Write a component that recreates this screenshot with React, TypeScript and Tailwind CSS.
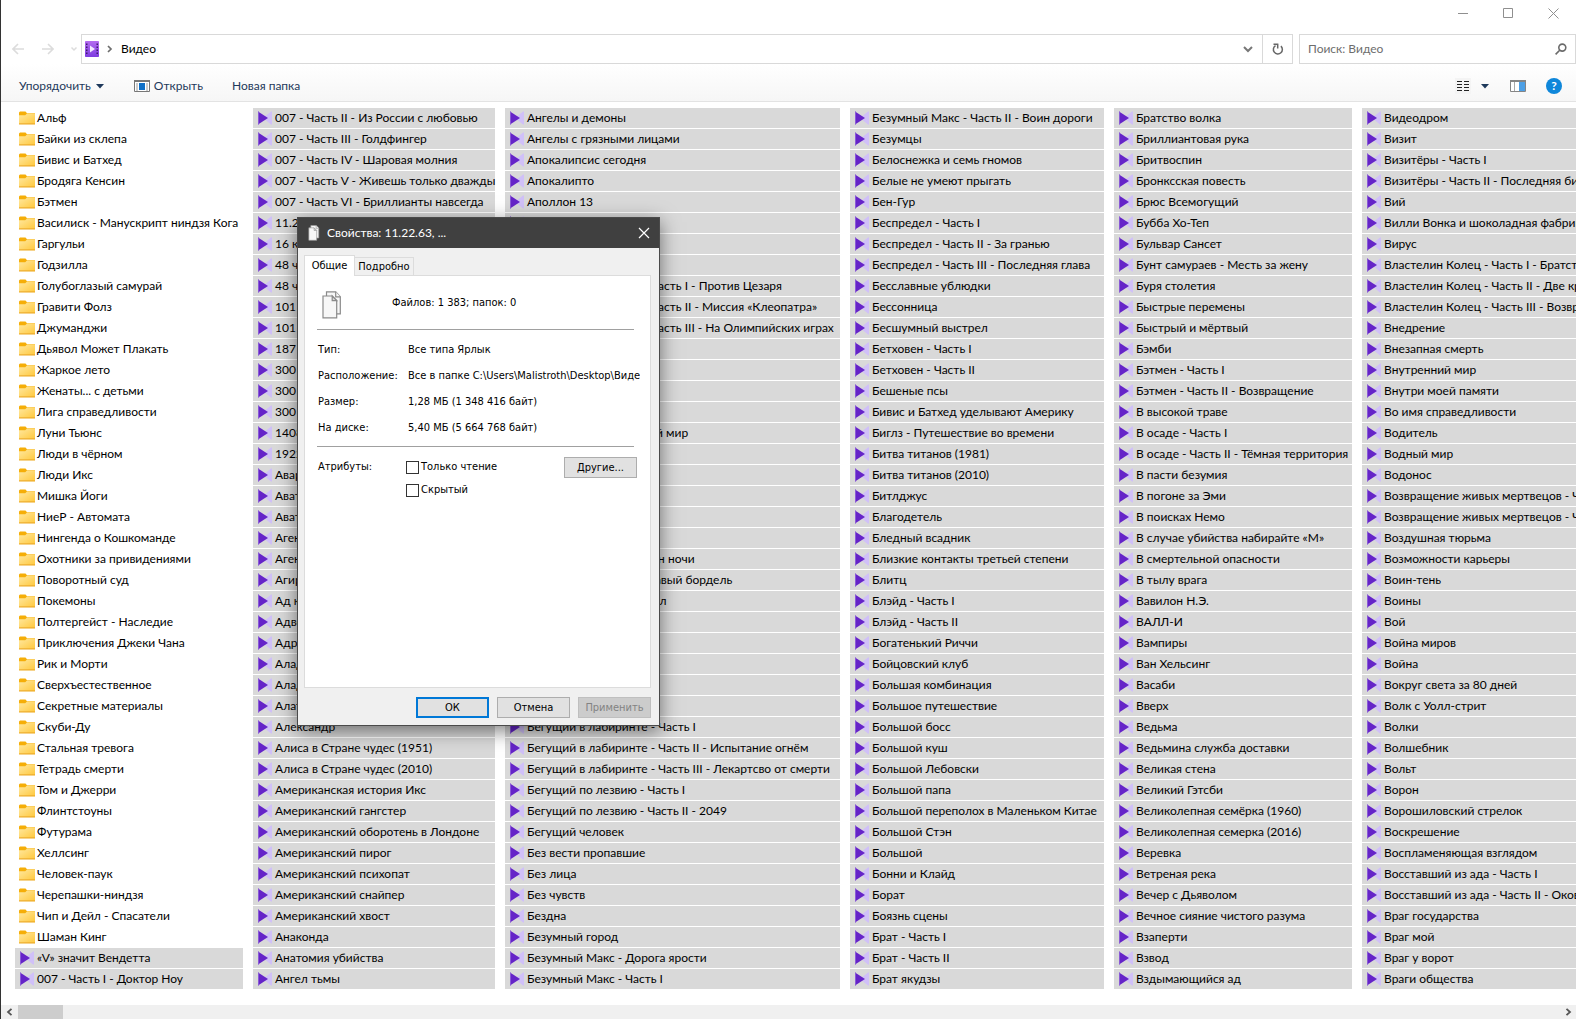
import type { ReactNode } from 'react'

interface Column {
  width: string
  folders?: string[]
  files: string[]
}

const columns: Column[] = [
  {
    width: 'w-[228px]',
    folders: [
      'Альф', 'Байки из склепа', 'Бивис и Батхед', 'Бродяга Кенсин', 'Бэтмен',
      'Василиск - Манускрипт ниндзя Кога', 'Гаргульи', 'Годзилла', 'Голубоглазый самурай',
      'Гравити Фолз', 'Джуманджи', 'Дьявол Может Плакать', 'Жаркое лето', 'Женаты... с детьми',
      'Лига справедливости', 'Луни Тьюнс', 'Люди в чёрном', 'Люди Икс', 'Мишка Йоги',
      'НиеР - Автомата', 'Нингенда о Кошкоманде', 'Охотники за привидениями', 'Поворотный суд',
      'Покемоны', 'Полтергейст - Наследие', 'Приключения Джеки Чана', 'Рик и Морти',
      'Сверхъестественное', 'Секретные материалы', 'Скуби-Ду', 'Стальная тревога',
      'Тетрадь смерти', 'Том и Джерри', 'Флинтстоуны', 'Футурама', 'Хеллсинг', 'Человек-паук',
      'Черепашки-ниндзя', 'Чип и Дейл - Спасатели', 'Шаман Кинг',
    ],
    files: ['«V» значит Вендетта', '007 - Часть I - Доктор Ноу'],
  },
  {
    width: 'w-[242px]',
    files: [
      '007 - Часть II - Из России с любовью', '007 - Часть III - Голдфингер',
      '007 - Часть IV - Шаровая молния', '007 - Часть V - Живешь только дважды',
      '007 - Часть VI - Бриллианты навсегда', '11.22.63', '16 кварталов', '48 часов - Часть I',
      '48 часов - Часть II', '101 далматинец (1961)', '101 далматинец (1996)', '187',
      '300 - Часть I', '300 - Часть II', '300 - Часть III', '1408', '1922', 'Авария',
      'Аватар - Часть I', 'Аватар - Часть II', 'Агент 117', 'Агент Джонни Инглиш',
      'Агирре - Гнев божий', 'Ад каннибалов', 'Адвокат дьявола', 'Адреналин',
      'Аладдин (1992)', 'Аладдин (2019)', 'Алатристе', 'Александр',
      'Алиса в Стране чудес (1951)', 'Алиса в Стране чудес (2010)', 'Американская история Икс',
      'Американский гангстер', 'Американский оборотень в Лондоне', 'Американский пирог',
      'Американский психопат', 'Американский снайпер', 'Американский хвост', 'Анаконда',
      'Анатомия убийства', 'Ангел тьмы',
    ],
  },
  {
    width: 'w-[335px]',
    files: [
      'Ангелы и демоны', 'Ангелы с грязными лицами', 'Апокалипсис сегодня', 'Апокалипто',
      'Аполлон 13', 'Апостол', 'Арахнофобия', 'Армагеддон',
      'Астерикс и Обеликс - Часть I - Против Цезаря',
      'Астерикс и Обеликс - Часть II - Миссия «Клеопатра»',
      'Астерикс и Обеликс - Часть III - На Олимпийских играх',
      'Астрал', 'Атака титанов', 'Атака клонов', 'Атлантида', 'Атлантида - Затерянный мир',
      'Афера', 'Аферисты', 'Афоня', 'Багровый пик', 'Багси Мэлоун',
      'Байки из склепа - Демон ночи', 'Байки из склепа - Кровавый бордель',
      'Байки из склепа - Ритуал', 'Балто', 'Банши', 'Бараны', 'Бассейн', 'Бегущая',
      'Бегущий в лабиринте - Часть I', 'Бегущий в лабиринте - Часть II - Испытание огнём',
      'Бегущий в лабиринте - Часть III - Лекартсво от смерти', 'Бегущий по лезвию - Часть I',
      'Бегущий по лезвию - Часть II - 2049', 'Бегущий человек', 'Без вести пропавшие',
      'Без лица', 'Без чувств', 'Бездна', 'Безумный город', 'Безумный Макс - Дорога ярости',
      'Безумный Макс - Часть I',
    ],
  },
  {
    width: 'w-[254px]',
    files: [
      'Безумный Макс - Часть II - Воин дороги', 'Безумцы', 'Белоснежка и семь гномов',
      'Белые не умеют прыгать', 'Бен-Гур', 'Беспредел - Часть I',
      'Беспредел - Часть II - За гранью', 'Беспредел - Часть III - Последняя глава',
      'Бесславные ублюдки', 'Бессонница', 'Бесшумный выстрел', 'Бетховен - Часть I',
      'Бетховен - Часть II', 'Бешеные псы', 'Бивис и Батхед уделывают Америку',
      'Биглз - Путешествие во времени', 'Битва титанов (1981)', 'Битва титанов (2010)',
      'Битлджус', 'Благодетель', 'Бледный всадник', 'Близкие контакты третьей степени',
      'Блитц', 'Блэйд - Часть I', 'Блэйд - Часть II', 'Богатенький Риччи', 'Бойцовский клуб',
      'Большая комбинация', 'Большое путешествие', 'Большой босс', 'Большой куш',
      'Большой Лебовски', 'Большой папа', 'Большой переполох в Маленьком Китае',
      'Большой Стэн', 'Большой', 'Бонни и Клайд', 'Борат', 'Боязнь сцены', 'Брат - Часть I',
      'Брат - Часть II', 'Брат якудзы',
    ],
  },
  {
    width: 'w-[238px]',
    files: [
      'Братство волка', 'Бриллиантовая рука', 'Бритвоспин', 'Бронксская повесть',
      'Брюс Всемогущий', 'Бубба Хо-Теп', 'Бульвар Сансет', 'Бунт самураев - Месть за жену',
      'Буря столетия', 'Быстрые перемены', 'Быстрый и мёртвый', 'Бэмби', 'Бэтмен - Часть I',
      'Бэтмен - Часть II - Возвращение', 'В высокой траве', 'В осаде - Часть I',
      'В осаде - Часть II - Тёмная территория', 'В пасти безумия', 'В погоне за Эми',
      'В поисках Немо', 'В случае убийства набирайте «М»', 'В смертельной опасности',
      'В тылу врага', 'Вавилон Н.Э.', 'ВАЛЛ-И', 'Вампиры', 'Ван Хельсинг', 'Васаби', 'Вверх',
      'Ведьма', 'Ведьмина служба доставки', 'Великая стена', 'Великий Гэтсби',
      'Великолепная семёрка (1960)', 'Великолепная семерка (2016)', 'Веревка',
      'Ветреная река', 'Вечер с Дьяволом', 'Вечное сияние чистого разума', 'Взаперти',
      'Взвод', 'Вздымающийся ад',
    ],
  },
  {
    width: 'w-[300px]',
    files: [
      'Видеодром', 'Визит', 'Визитёры - Часть I', 'Визитёры - Часть II - Последняя битва',
      'Вий', 'Вилли Вонка и шоколадная фабрика', 'Вирус',
      'Властелин Колец - Часть I - Братство Кольца',
      'Властелин Колец - Часть II - Две крепости',
      'Властелин Колец - Часть III - Возвращение Короля', 'Внедрение', 'Внезапная смерть',
      'Внутренний мир', 'Внутри моей памяти', 'Во имя справедливости', 'Водитель',
      'Водный мир', 'Водонос', 'Возвращение живых мертвецов - Часть I',
      'Возвращение живых мертвецов - Часть II', 'Воздушная тюрьма', 'Возможности карьеры',
      'Воин-тень', 'Воины', 'Вой', 'Война миров', 'Война', 'Вокруг света за 80 дней',
      'Волк с Уолл-стрит', 'Волки', 'Волшебник', 'Вольт', 'Ворон', 'Ворошиловский стрелок',
      'Воскрешение', 'Воспламеняющая взглядом', 'Восставший из ада - Часть I',
      'Восставший из ада - Часть II - Оковы', 'Враг государства', 'Враг мой',
      'Враг у ворот', 'Враги общества',
    ],
  },
]

const properties = [
  ['Тип:', 'Все типа Ярлык'],
  ['Расположение:', 'Все в папке C:\\Users\\Malistroth\\Desktop\\Видео'],
  ['Размер:', '1,28 МБ (1 348 416 байт)'],
  ['На диске:', '5,40 МБ (5 664 768 байт)'],
]

function FolderIcon() {
  return (
    <svg className="h-4 w-4 shrink-0" viewBox="0 0 16 16">
      <defs>
        <linearGradient id="folder" x1="0" y1="0" x2="1" y2="1">
          <stop offset="0" stopColor="#ffe8a0" />
          <stop offset="1" stopColor="#ffc83c" />
        </linearGradient>
      </defs>
      <path d="M0 2.5 1 1.5h5.5l1.5 1.7h8V6H0z" fill="#f5ae08" />
      <path d="M0 5.3h6.2L8 3.6h8v10.6H0z" fill="url(#folder)" />
      <path d="M0 13.4h16v1H0z" fill="#e9a525" />
    </svg>
  )
}

function VideoIcon() {
  return (
    <svg className="h-3.5 w-3.5 shrink-0" viewBox="0 0 14 14">
      <path d="M14 .5v13h-1L5 7l8-6.5z" fill="#d0c0f8" />
      <path d="M0 .5 10 7 0 13.5z" fill="#6524c8" />
      <path d="M0 .5h1v13H0z" fill="#8a5ad6" />
    </svg>
  )
}

function PagesIcon({ className, dark }: { className: string; dark?: boolean }) {
  const stroke = dark ? '#9a9a9a' : '#8a8a8a'
  return (
    <svg className={className} viewBox="0 0 20 28" fill="#f7f7f7" stroke={stroke} strokeWidth="1.2">
      <path d="M4.5.8h9.2l4.6 5v17H4.5z" />
      <path d="M13.7.8v5h4.6" />
      <path d="M1 5h9.2l4.5 4.6v17.2H1z" />
      <path d="M10.2 5v4.6h4.5z" fill="#dcdcdc" />
    </svg>
  )
}

function DownTriangle() {
  return (
    <svg className="h-2 w-2" viewBox="0 0 8 8">
      <path d="M0 2h8L4 6.5z" fill="#1e395b" />
    </svg>
  )
}

function TitleBar() {
  return (
    <div className="flex h-[34px] justify-end text-[#8f8f8f]">
      <button aria-label="Свернуть" className="flex h-[26px] w-[45px] items-center justify-center">
        <svg className="h-[11px] w-[11px]" viewBox="0 0 11 11" stroke="currentColor">
          <path d="M0 5.5h10" />
        </svg>
      </button>
      <button aria-label="Развернуть" className="flex h-[26px] w-[45px] items-center justify-center">
        <svg className="h-[11px] w-[11px]" viewBox="0 0 11 11" stroke="currentColor" fill="none">
          <path d="M.5.5h9v9h-9z" />
        </svg>
      </button>
      <button aria-label="Закрыть" className="flex h-[26px] w-[45px] items-center justify-center">
        <svg className="h-[11px] w-[11px]" viewBox="0 0 11 11" stroke="currentColor">
          <path d="m.5.5 10 10M10.5.5l-10 10" />
        </svg>
      </button>
    </div>
  )
}

function AddressBar() {
  return (
    <div className="flex h-[30px]">
      <nav className="flex w-20 shrink-0 items-center pl-[11px] text-[#dcdcdc]">
        <button aria-label="Назад">
          <svg className="h-3 w-3" viewBox="0 0 12 12" stroke="currentColor" strokeWidth="1.6" fill="none">
            <path d="M12 6H1M6 1 1 6l5 5" />
          </svg>
        </button>
        <button aria-label="Вперёд" className="ml-[18px]">
          <svg className="h-3 w-3" viewBox="0 0 12 12" stroke="currentColor" strokeWidth="1.6" fill="none">
            <path d="M0 6h11M6 1l5 5-5 5" />
          </svg>
        </button>
        <button aria-label="Последние расположения" className="ml-4">
          <svg className="h-2 w-2" viewBox="0 0 8 8" stroke="currentColor" strokeWidth="1.5" fill="none">
            <path d="m1.5 2.5 2.5 2.5 2.5-2.5" />
          </svg>
        </button>
      </nav>
      <div className="flex min-w-0 flex-1 border border-[#d9d9d9]">
        <div className="flex min-w-0 flex-1 items-center pl-[3px]">
          <svg className="h-4 w-[14px]" viewBox="0 0 14 16">
            <defs>
              <linearGradient id="film" x1="0" y1="0" x2="0" y2="1">
                <stop offset="0" stopColor="#b46cf0" />
                <stop offset="1" stopColor="#7d3be0" />
              </linearGradient>
            </defs>
            <rect width="14" height="16" rx=".8" fill="url(#film)" />
            <path
              d="M1 2.5h1.5V4H1zm0 3h1.5V7H1zm0 3h1.5V10H1zm0 3h1.5V13H1zm10.5-9H13V4h-1.5zm0 3H13V7h-1.5zm0 3H13V10h-1.5zm0 3H13V13h-1.5z"
              fill="#3f1a6b"
            />
            <path d="M5 4.5 10 8l-5 3.5z" fill="#f1e8ff" />
          </svg>
          <svg className="ml-[7px] h-2 w-2" viewBox="0 0 8 8" stroke="#6e6e6e" strokeWidth="1.7" fill="none">
            <path d="m2 1 3 3-3 3" />
          </svg>
          <span className="ml-[7px] text-xs">Видео</span>
          <button aria-label="Список адресов" className="ml-auto mr-[9px]">
            <svg className="h-[10px] w-[10px]" viewBox="0 0 10 10" stroke="#777" strokeWidth="2" fill="none">
              <path d="m1 3 4 4 4-4" />
            </svg>
          </button>
        </div>
        <button aria-label="Обновить" className="flex w-[30px] items-center justify-center border-l border-[#d9d9d9]">
          <svg className="h-3 w-3" viewBox="0 0 12 12" stroke="#666" strokeWidth="1.5" fill="none">
            <path d="M3.5 2.6a4.5 4.5 0 1 0 5.4.5" />
            <path d="M1.5 1.2h4.8M5.7.8V5.6" />
          </svg>
        </button>
      </div>
      <label className="ml-1.5 flex w-[277px] shrink-0 items-center border border-[#d9d9d9] px-2">
        <input
          type="search"
          aria-label="Поиск"
          placeholder="Поиск: Видео"
          className="min-w-0 flex-1 bg-transparent text-xs outline-none placeholder:text-[#6d6d6d]"
        />
        <svg className="h-3 w-3" viewBox="0 0 12 12" stroke="#6b6b6b" strokeWidth="1.6" fill="none">
          <circle cx="7.3" cy="4.6" r="3.5" />
          <path d="M4.7 7.2.6 11.4" />
        </svg>
      </label>
    </div>
  )
}

function Toolbar() {
  return (
    <div className="flex h-[38px] items-center border-b border-[#e3e3e3] bg-linear-to-b from-white to-[#f6f6f6] pl-[18px] pr-[14px] pt-1.5 text-xs text-[#1e395b]">
      <button className="flex items-center gap-[5px]">
        Упорядочить
        <DownTriangle />
      </button>
      <button className="ml-[30px] flex items-center gap-1">
        <svg className="h-3 w-4" viewBox="0 0 16 12">
          <path d="M.5.5h15v11H.5z" fill="#fff" stroke="#777" />
          <path d="M0 0h16v2H0z" fill="#777" />
          <path d="M2 4h2M2 6h2M2 8h2M2 10h2M12 4h2M12 6h2M12 8h2M12 10h2" stroke="#999" />
          <path d="M5 3h6v7H5z" fill="#0f6fc6" />
        </svg>
        Открыть
      </button>
      <button className="ml-[29px]">Новая папка</button>
      <div className="ml-auto flex items-center">
        <button aria-label="Вид" className="flex h-4 w-4 items-center justify-center bg-[#f4f4f4]">
          <svg className="h-3 w-3" viewBox="0 0 12 12" stroke="#222">
            <path d="M0 1.5h5M7 1.5h5M0 4.5h5M7 4.5h5M0 7.5h5M7 7.5h5M0 10.5h5M7 10.5h5" />
          </svg>
        </button>
        <button aria-label="Другие варианты" className="ml-[10px]">
          <DownTriangle />
        </button>
        <button aria-label="Область просмотра" className="ml-[21px]">
          <svg className="h-3 w-4" viewBox="0 0 16 12">
            <path d="M.5.5h15v11H.5z" fill="#fff" stroke="#858585" />
            <path d="M0 0h16v2H0z" fill="#858585" />
            <path d="M4.5 2v9" stroke="#aaa" />
            <path d="M9 2h6v9H9z" fill="#4da0e6" />
          </svg>
        </button>
        <button
          aria-label="Справка"
          className="ml-5 flex h-4 w-4 items-center justify-center rounded-full bg-[#0f87da] text-xs font-bold text-white"
        >
          ?
        </button>
      </div>
    </div>
  )
}

function FileList() {
  return (
    <main className="flex flex-1 gap-[10px] overflow-hidden pl-[14px] pt-1.5">
      {columns.map((column, i) => (
        <ul key={i} className={`shrink-0 text-xs text-black ${column.width}`}>
          {column.folders?.map((name) => (
            <li key={name} className="mb-px flex h-5 items-center gap-0.5 whitespace-nowrap pl-1">
              <FolderIcon />
              {name}
            </li>
          ))}
          {column.files.map((name) => (
            <li key={name} className="mb-px flex h-5 items-center gap-[3px] whitespace-nowrap bg-[#d9d9d9] pl-[5px]">
              <VideoIcon />
              {name}
            </li>
          ))}
        </ul>
      ))}
    </main>
  )
}

function ScrollBar() {
  return (
    <div className="flex h-[14px] items-center bg-[#f0f0f0] text-[#555]">
      <button aria-label="Прокрутить влево" className="flex h-full w-[17px] items-center justify-center">
        <svg className="h-2 w-2" viewBox="0 0 8 8" stroke="currentColor" strokeWidth="1.8" fill="none">
          <path d="M5.5.8 2 4l3.5 3.2" />
        </svg>
      </button>
      <div className="h-full w-[45px] bg-[#cdcdcd]" />
      <button aria-label="Прокрутить вправо" className="ml-auto flex h-full w-[17px] items-center justify-center">
        <svg className="h-2 w-2" viewBox="0 0 8 8" stroke="currentColor" strokeWidth="1.8" fill="none">
          <path d="M2.5.8 6 4 2.5 7.2" />
        </svg>
      </button>
    </div>
  )
}

function DialogButton({ children, className, disabled }: { children: ReactNode; className: string; disabled?: boolean }) {
  return (
    <button disabled={disabled} className={`h-[21px] w-[73px] text-center leading-none ${className}`}>
      {children}
    </button>
  )
}

function PropertiesDialog() {
  return (
    <section
      role="dialog"
      aria-labelledby="dialog-title"
      className="absolute left-[296px] top-[217px] w-[363px] border border-[#4a4a4a] bg-[#f0f0f0] font-['DejaVu_Sans_Condensed','DejaVu_Sans',sans-serif] text-[11px] leading-4 text-black shadow-[0_5px_18px_rgba(0,0,0,0.5)]"
    >
      <header className="flex h-[30px] items-center bg-[#404040] pl-[10px] pr-[9px] text-white">
        <PagesIcon className="h-4 w-3" dark />
        <h1 id="dialog-title" className="ml-[7px] font-['Lato',sans-serif] text-xs">
          Свойства: 11.22.63, ...
        </h1>
        <button aria-label="Закрыть" className="ml-auto">
          <svg className="h-3 w-3" viewBox="0 0 12 12" stroke="currentColor" strokeWidth="1.2">
            <path d="m1 1 10 10M11 1 1 11" />
          </svg>
        </button>
      </header>

      <div className="pb-[7px] pl-[6px] pr-2 pt-[7px]">
        <div role="tablist" className="flex items-end">
          <button role="tab" aria-selected="true" className="-mb-px h-[21px] w-[51px] border border-b-0 border-[#dcdcdc] bg-white">
            Общие
          </button>
          <button role="tab" aria-selected="false" className="h-[18px] w-[59px] border border-b-0 border-l-0 border-[#dcdcdc]">
            Подробно
          </button>
        </div>
        <div role="tabpanel" className="h-[413px] border border-[#dcdcdc] bg-white px-3">
          <div className="flex h-[53px] items-center pl-[5px]">
            <PagesIcon className="mt-1 h-7 w-5" />
            <span className="ml-[50px]">Файлов: 1 383; папок: 0</span>
          </div>
          <hr className="mr-1 border-[#a0a0a0]" />
          <dl className="pb-[5px] pt-[7px]">
            {properties.map(([label, value]) => (
              <div key={label} className="flex h-[26px] items-center">
                <dt className="w-[91px] shrink-0 pl-px">{label}</dt>
                <dd className="w-[232px] shrink-0 overflow-hidden whitespace-nowrap">{value}</dd>
              </div>
            ))}
          </dl>
          <hr className="mr-1 border-[#a0a0a0]" />
          <div className="flex items-start pt-[10px]">
            <span className="mt-0.5 w-[89px] pl-px">Атрибуты:</span>
            <div className="flex flex-col gap-[7px] pt-0.5">
              {['Только чтение', 'Скрытый'].map((label) => (
                <label key={label} className="flex items-center gap-0.5">
                  <input type="checkbox" className="h-[13px] w-[13px] appearance-none border border-[#333] bg-white" />
                  {label}
                </label>
              ))}
            </div>
            <DialogButton className="ml-auto mr-px border border-[#adadad] bg-[#e1e1e1]">Другие...</DialogButton>
          </div>
        </div>
        <footer className="flex justify-end gap-2 pt-[9px]">
          <DialogButton className="border-2 border-[#0078d7] bg-[#e1e1e1]">ОК</DialogButton>
          <DialogButton className="border border-[#adadad] bg-[#e1e1e1]">Отмена</DialogButton>
          <DialogButton disabled className="border border-[#bfbfbf] bg-[#cccccc] text-[#838383]">
            Применить
          </DialogButton>
        </footer>
      </div>
    </section>
  )
}

export default function App() {
  return (
    <div className="relative flex min-h-screen flex-col overflow-hidden border-l border-[#333] bg-white font-['Lato',sans-serif] text-black">
      <TitleBar />
      <AddressBar />
      <Toolbar />
      <FileList />
      <ScrollBar />
      <PropertiesDialog />
    </div>
  )
}
